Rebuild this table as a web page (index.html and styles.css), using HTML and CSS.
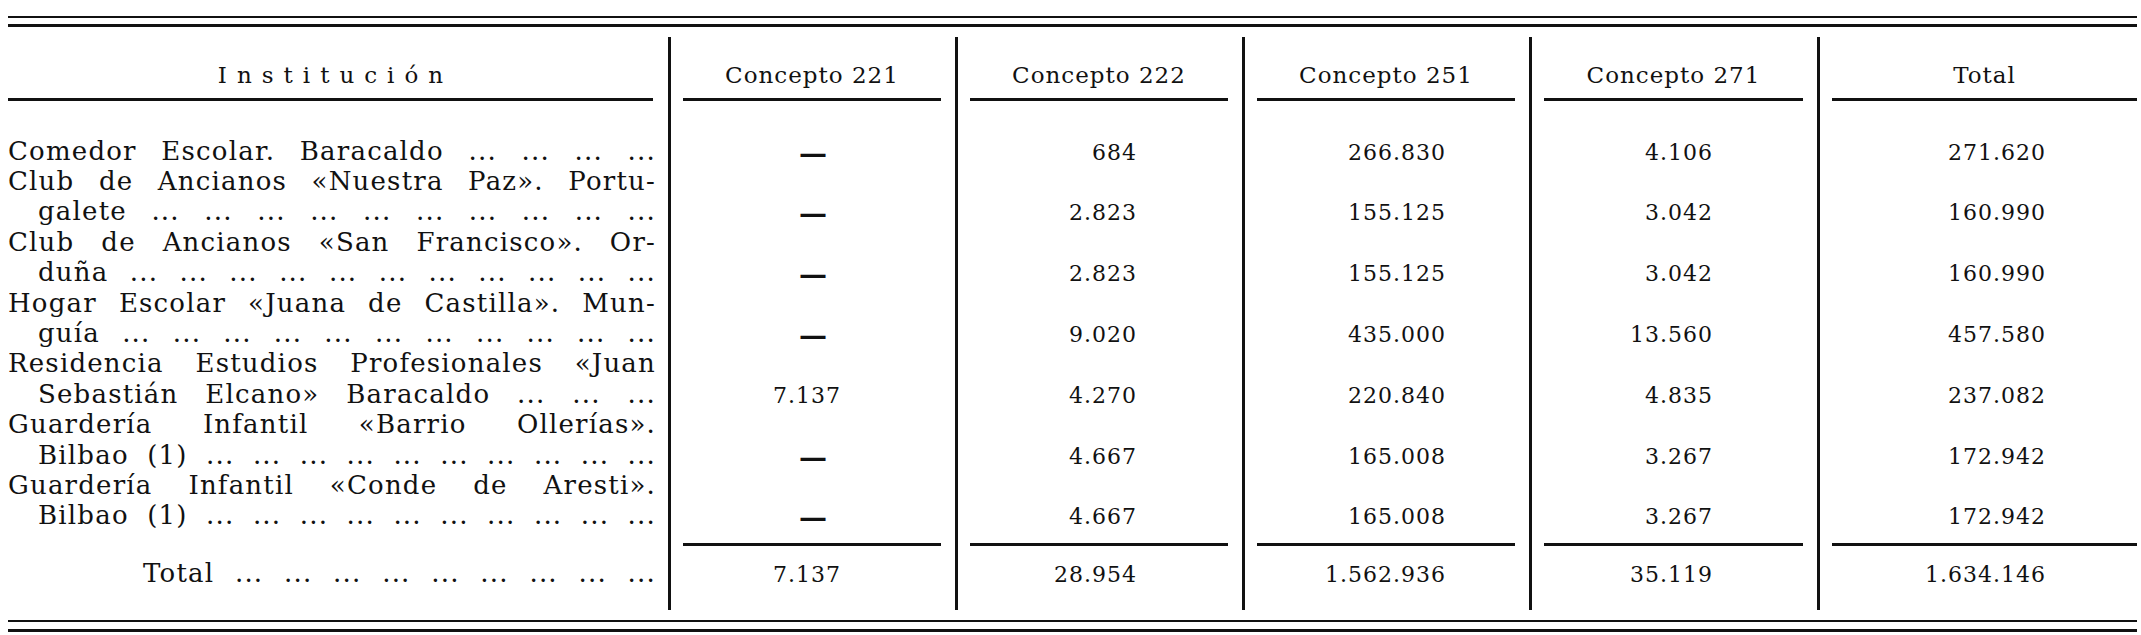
FILE: index.html
```html
<!DOCTYPE html>
<html lang="es">
<head>
<meta charset="utf-8">
<title>Instituciones</title>
<link rel="stylesheet" href="styles.css">
</head>
<body>
<div class="page">
  <div class="rules top">
    <div class="rule-thin"></div>
    <div class="rule-thick"></div>
  </div>

  <div class="grid">
    <!-- header -->
    <div class="h h1"><div class="hd inst">Institución</div></div>
    <div class="h v"><div class="hd">Concepto 221</div></div>
    <div class="h v"><div class="hd">Concepto 222</div></div>
    <div class="h v"><div class="hd">Concepto 251</div></div>
    <div class="h v"><div class="hd">Concepto 271</div></div>
    <div class="h v h6"><div class="hd">Total</div></div>

    <!-- row 1 -->
    <div class="lab"><div class="ln">Comedor Escolar. Baracaldo ... ... ... ...</div></div>
    <div class="n v c2"><div class="val dash"><span class="dsh">—</span></div></div>
    <div class="n v c3"><div class="val"><span class="d">684</span></div></div>
    <div class="n v c4"><div class="val"><span class="d">266.830</span></div></div>
    <div class="n v c5"><div class="val"><span class="d">4.106</span></div></div>
    <div class="n v c6"><div class="val"><span class="d">271.620</span></div></div>

    <!-- row 2 -->
    <div class="lab">
      <div class="ln">Club de Ancianos «Nuestra Paz». Portu-</div>
      <div class="ln cont">galete ... ... ... ... ... ... ... ... ... ...</div>
    </div>
    <div class="n v c2"><div class="val dash"><span class="dsh">—</span></div></div>
    <div class="n v c3"><div class="val"><span class="d">2.823</span></div></div>
    <div class="n v c4"><div class="val"><span class="d">155.125</span></div></div>
    <div class="n v c5"><div class="val"><span class="d">3.042</span></div></div>
    <div class="n v c6"><div class="val"><span class="d">160.990</span></div></div>

    <!-- row 3 -->
    <div class="lab">
      <div class="ln">Club de Ancianos «San Francisco». Or-</div>
      <div class="ln cont">duña ... ... ... ... ... ... ... ... ... ... ...</div>
    </div>
    <div class="n v c2"><div class="val dash"><span class="dsh">—</span></div></div>
    <div class="n v c3"><div class="val"><span class="d">2.823</span></div></div>
    <div class="n v c4"><div class="val"><span class="d">155.125</span></div></div>
    <div class="n v c5"><div class="val"><span class="d">3.042</span></div></div>
    <div class="n v c6"><div class="val"><span class="d">160.990</span></div></div>

    <!-- row 4 -->
    <div class="lab">
      <div class="ln">Hogar Escolar «Juana de Castilla». Mun-</div>
      <div class="ln cont">guía ... ... ... ... ... ... ... ... ... ... ...</div>
    </div>
    <div class="n v c2"><div class="val dash"><span class="dsh">—</span></div></div>
    <div class="n v c3"><div class="val"><span class="d">9.020</span></div></div>
    <div class="n v c4"><div class="val"><span class="d">435.000</span></div></div>
    <div class="n v c5"><div class="val"><span class="d">13.560</span></div></div>
    <div class="n v c6"><div class="val"><span class="d">457.580</span></div></div>

    <!-- row 5 -->
    <div class="lab">
      <div class="ln">Residencia Estudios Profesionales «Juan</div>
      <div class="ln cont">Sebastián Elcano» Baracaldo ... ... ...</div>
    </div>
    <div class="n v c2"><div class="val"><span class="d">7.137</span></div></div>
    <div class="n v c3"><div class="val"><span class="d">4.270</span></div></div>
    <div class="n v c4"><div class="val"><span class="d">220.840</span></div></div>
    <div class="n v c5"><div class="val"><span class="d">4.835</span></div></div>
    <div class="n v c6"><div class="val"><span class="d">237.082</span></div></div>

    <!-- row 6 -->
    <div class="lab">
      <div class="ln">Guardería Infantil «Barrio Ollerías».</div>
      <div class="ln cont">Bilbao (1) ... ... ... ... ... ... ... ... ... ...</div>
    </div>
    <div class="n v c2"><div class="val dash"><span class="dsh">—</span></div></div>
    <div class="n v c3"><div class="val"><span class="d">4.667</span></div></div>
    <div class="n v c4"><div class="val"><span class="d">165.008</span></div></div>
    <div class="n v c5"><div class="val"><span class="d">3.267</span></div></div>
    <div class="n v c6"><div class="val"><span class="d">172.942</span></div></div>

    <!-- row 7 -->
    <div class="lab">
      <div class="ln">Guardería Infantil «Conde de Aresti».</div>
      <div class="ln cont">Bilbao (1) ... ... ... ... ... ... ... ... ... ...</div>
    </div>
    <div class="n v c2"><div class="val dash"><span class="dsh">—</span></div></div>
    <div class="n v c3"><div class="val"><span class="d">4.667</span></div></div>
    <div class="n v c4"><div class="val"><span class="d">165.008</span></div></div>
    <div class="n v c5"><div class="val"><span class="d">3.267</span></div></div>
    <div class="n v c6"><div class="val"><span class="d">172.942</span></div></div>

    <!-- total -->
    <div class="t t1"><div class="tl blank"><div class="ln tot">Total ... ... ... ... ... ... ... ... ...</div></div></div>
    <div class="t v c2"><div class="tl"><div class="val"><span class="d">7.137</span></div></div></div>
    <div class="t v c3"><div class="tl"><div class="val"><span class="d">28.954</span></div></div></div>
    <div class="t v c4"><div class="tl"><div class="val"><span class="d">1.562.936</span></div></div></div>
    <div class="t v c5"><div class="tl"><div class="val"><span class="d">35.119</span></div></div></div>
    <div class="t v c6"><div class="tl"><div class="val"><span class="d">1.634.146</span></div></div></div>
  </div>

  <div class="rules bottom">
    <div class="rule-thin"></div>
    <div class="rule-thick"></div>
  </div>
</div>
</body>
</html>
```

FILE: styles.css
```css
* { box-sizing: border-box; }

html, body {
  margin: 0;
  background: #ffffff;
}

body {
  color: #111111;
  font-family: "DejaVu Serif", "Liberation Serif", serif;
}

.page {
  width: 2141px;
  padding: 16px 4px 0 8px;
}

/* double rules */
.rule-thin { height: 2px; background: #111111; }
.rule-thick { height: 3px; background: #111111; }
.rules .rule-thin { margin-bottom: 6px; }
.rules.top { margin-bottom: 10px; }
.rules.bottom { margin-top: 10px; }
.rules.bottom .rule-thin { margin-bottom: 7px; }

/* grid */
.grid {
  display: grid;
  grid-template-columns: 660px 287px 287px 287px 288px 320px;
}

.v { border-left: 3px solid #111111; }

/* header */
.h { padding: 24px 14px 34.5px 12px; }
.h.h1 { padding: 24px 15px 34.5px 0; }
.h.h6 { padding-right: 0; }

.hd {
  font-size: 23px;
  line-height: 28px;
  letter-spacing: 1px;
  text-align: center;
  padding-bottom: 9px;
  border-bottom: 3px solid #111111;
  white-space: nowrap;
}
.hd.inst {
  letter-spacing: 10px;
  padding-left: 10px;
}

/* label column */
.lab, .ln {
  font-size: 26px;
  line-height: 30.4px;
  letter-spacing: 1.2px;
}
.lab { padding-right: 12px; }
.ln {
  text-align: justify;
  text-align-last: justify;
}
.ln.cont { padding-left: 30px; }
.ln.tot { padding-left: 135px; }

/* number columns */
.c2 { --pr: 114px; }
.c3 { --pr: 105px; }
.c4 { --pr: 83px; }
.c5 { --pr: 104px; }
.c6 { --pr: 91px; }

.n {
  display: flex;
  flex-direction: column;
  justify-content: flex-end;
}

.val {
  font-size: 26px;
  line-height: 30.4px;
  text-align: right;
  padding-right: var(--pr);
  white-space: nowrap;
}

.d {
  font-size: 22px;
  line-height: 1;
  letter-spacing: 1px;
}

.val.dash {
  text-align: center;
  padding-right: 0;
}
.dsh {
  font-size: 28px;
  font-weight: bold;
  line-height: 1;
  position: relative;
  top: 3px;
}

/* total row */
.t { padding: 12.4px 14px 22px 12px; }
.t.t1 { padding: 12.4px 0 22px 0; }
.t.c6 { padding-right: 0; }

.tl {
  border-top: 3px solid #111111;
  padding-top: 11.4px;
}
.tl.blank { border-top-color: transparent; }
.t1 .tl { padding-right: 12px; }

.t .val { padding-right: calc(var(--pr) - 14px); }
.t.c6 .val { padding-right: var(--pr); }
```
